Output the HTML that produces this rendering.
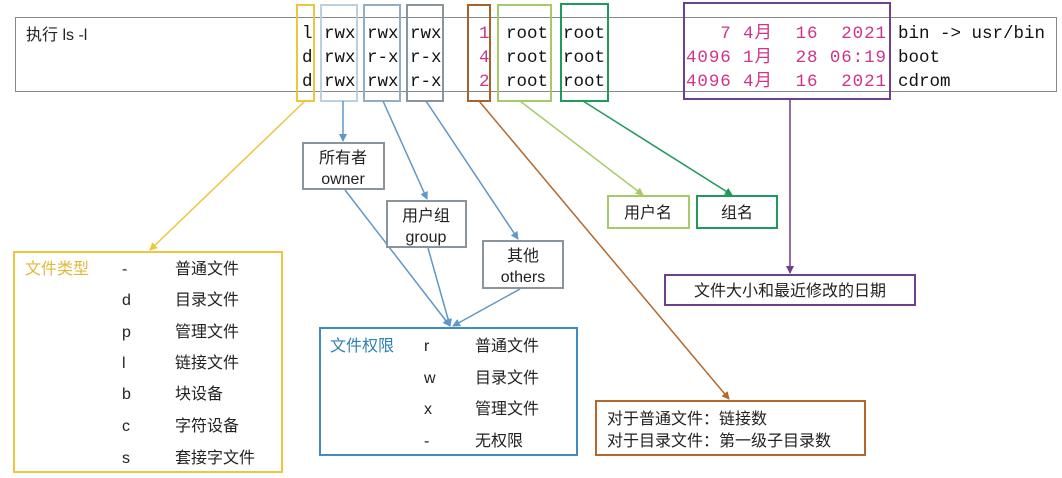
<!DOCTYPE html><html><head><meta charset="utf-8"><style>
body{margin:0;background:#fff;width:1062px;height:478px;overflow:hidden}
svg{display:block}
text{font-family:"Liberation Sans","Noto Sans CJK SC",sans-serif;font-size:16px;fill:#222}
.m text,text.m{font-family:"Liberation Mono","Noto Sans CJK SC",monospace;font-size:17.5px;fill:#111}
.m text.p,text.p{fill:#d0348a}
</style></head><body>
<svg width="1062" height="478" viewBox="0 0 1062 478">
<defs>
<marker id="a" markerWidth="8" markerHeight="8" refX="7" refY="4" orient="auto" markerUnits="userSpaceOnUse"><path d="M0,0L8,4L0,8z" fill="context-stroke"/></marker>
</defs>
<g fill="none" stroke-width="2">
<rect x="15.5" y="17.5" width="1041" height="74" stroke="#888" stroke-width="1"/>
<rect x="297" y="5" width="17" height="96" stroke="#ecc63c"/>
<rect x="321" y="5" width="36" height="96" stroke="#bdd0de"/>
<rect x="364" y="5" width="36" height="96" stroke="#93adc4"/>
<rect x="407" y="5" width="36" height="96" stroke="#8a949c"/>
<rect x="468" y="5" width="22" height="96" stroke="#a4622c"/>
<rect x="498" y="5" width="53" height="96" stroke="#a6ca6a"/>
<rect x="561" y="4" width="47" height="97" stroke="#1e9a5c"/>
<rect x="684" y="3" width="206" height="96" stroke="#6e3f8c"/>
</g>
<text x="26" y="40">执行 ls -l</text>
<g class="m">
<text x="302" y="38">l</text><text x="302" y="62">d</text><text x="302" y="86">d</text>
<text x="324" y="38">rwx</text><text x="324" y="62">rwx</text><text x="324" y="86">rwx</text>
<text x="367" y="38">rwx</text><text x="367" y="62">r-x</text><text x="367" y="86">rwx</text>
<text x="410" y="38">rwx</text><text x="410" y="62">r-x</text><text x="410" y="86">r-x</text>
<text x="479" y="38" class="p">1</text><text x="479" y="62" class="p">4</text><text x="479" y="86" class="p">2</text>
<text x="506" y="38">root</text><text x="506" y="62">root</text><text x="506" y="86">root</text>
<text x="563" y="38">root</text><text x="563" y="62">root</text><text x="563" y="86">root</text>
<text x="686" y="38" class="p" xml:space="preserve" textLength="200" lengthAdjust="spacing">   7 4月  16  2021</text>
<text x="686" y="62" class="p" xml:space="preserve" textLength="200" lengthAdjust="spacing">4096 1月  28 06:19</text>
<text x="686" y="86" class="p" xml:space="preserve" textLength="200" lengthAdjust="spacing">4096 4月  16  2021</text>
<text x="898" y="38">bin -&gt; usr/bin</text><text x="898" y="62">boot</text><text x="898" y="86">cdrom</text>
</g>
<g fill="none" stroke-width="1.5">
<line x1="343" y1="101" x2="343" y2="141" stroke="#5f97c8" marker-end="url(#a)"/>
<line x1="383" y1="101" x2="427" y2="199" stroke="#5f97c8" marker-end="url(#a)"/>
<line x1="426" y1="101" x2="518" y2="239" stroke="#5f97c8" marker-end="url(#a)"/>
<line x1="345" y1="190" x2="450" y2="326" stroke="#5f97c8" marker-end="url(#a)"/>
<line x1="428" y1="248" x2="450" y2="326" stroke="#5f97c8" marker-end="url(#a)"/>
<line x1="520" y1="289" x2="453" y2="326" stroke="#5f97c8" marker-end="url(#a)"/>
<line x1="305" y1="101" x2="150" y2="250" stroke="#ecc63c" marker-end="url(#a)"/>
<line x1="479" y1="101" x2="729" y2="399" stroke="#b3692e" marker-end="url(#a)"/>
<line x1="520" y1="101" x2="643" y2="195" stroke="#a6ca6a" marker-end="url(#a)"/>
<line x1="583" y1="101" x2="732" y2="195" stroke="#1e9a5c" marker-end="url(#a)"/>
<line x1="790" y1="99" x2="790" y2="273" stroke="#6e3f8c" marker-end="url(#a)"/>
</g>
<g fill="#fff" stroke-width="2">
<rect x="303" y="143" width="81" height="46" stroke="#8a949c"/>
<rect x="387" y="201" width="79" height="46" stroke="#8a949c"/>
<rect x="483" y="241" width="80" height="47" stroke="#8a949c"/>
<rect x="14" y="252" width="268" height="220" stroke="#ecc63c"/>
<rect x="320" y="328" width="257" height="127" stroke="#3f8cc4"/>
<rect x="596" y="401" width="269" height="54" stroke="#b3692e"/>
<rect x="608" y="196" width="81" height="32" stroke="#a6ca6a"/>
<rect x="697" y="196" width="80" height="32" stroke="#1e9a5c"/>
<rect x="665" y="275" width="250" height="30" stroke="#6e3f8c"/>
</g>
<g text-anchor="middle">
<text x="343" y="163">所有者</text><text x="343" y="184">owner</text>
<text x="426" y="221">用户组</text><text x="426" y="242">group</text>
<text x="523" y="261">其他</text><text x="523" y="282">others</text>
<text x="648" y="218">用户名</text><text x="737" y="218">组名</text>
<text x="790" y="296">文件大小和最近修改的日期</text>
</g>
<text x="607" y="424">对于普通文件：链接数</text>
<text x="607" y="446">对于目录文件：第一级子目录数</text>
<text x="25" y="274" style="fill:#e0b83a">文件类型</text>
<g>
<text x="122" y="274">-</text><text x="175" y="274">普通文件</text>
<text x="122" y="305">d</text><text x="175" y="305">目录文件</text>
<text x="122" y="337">p</text><text x="175" y="337">管理文件</text>
<text x="122" y="368">l</text><text x="175" y="368">链接文件</text>
<text x="122" y="399">b</text><text x="175" y="399">块设备</text>
<text x="122" y="431">c</text><text x="175" y="431">字符设备</text>
<text x="122" y="463">s</text><text x="175" y="463">套接字文件</text>
<text x="330" y="351" style="fill:#2f7fb4">文件权限</text>
<text x="424" y="351">r</text><text x="475" y="351">普通文件</text>
<text x="424" y="383">w</text><text x="475" y="383">目录文件</text>
<text x="424" y="414">x</text><text x="475" y="414">管理文件</text>
<text x="424" y="446">-</text><text x="475" y="446">无权限</text>
</g>
</svg>
</body></html>
